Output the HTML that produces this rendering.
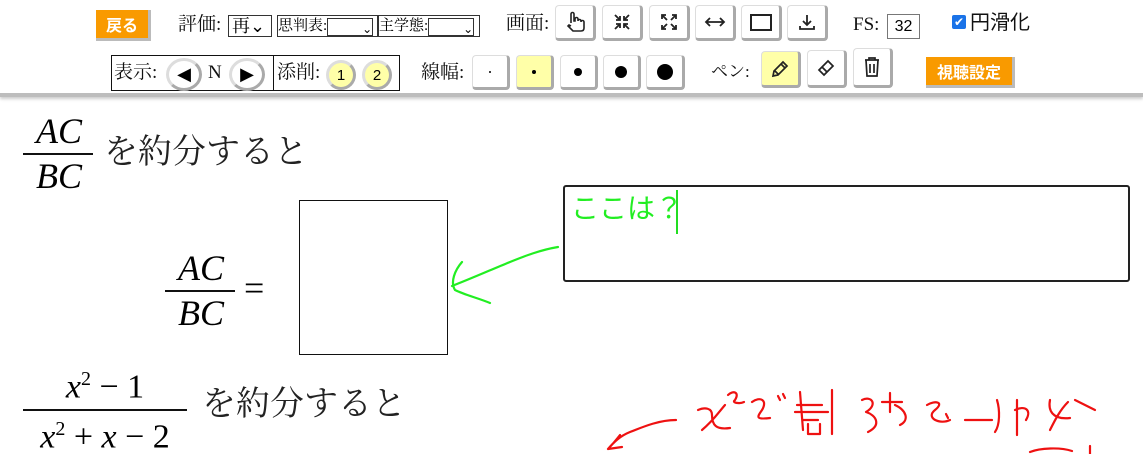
<!DOCTYPE html>
<html><head><meta charset="utf-8"><style>
body{margin:0;width:1143px;height:454px;overflow:hidden;background:#fff;position:relative;font-family:"Liberation Serif","Noto Serif CJK JP",serif;}
.a{position:absolute}
.tb{position:absolute;left:0;top:0;width:1143px;height:93px;background:#fff;border-bottom:4px solid #bdbdbd;box-shadow:0 2px 3px #ccc}
.btn{position:absolute;background:#fff;border:1px solid #ddd;border-right:3px solid #aaa;border-bottom:3px solid #aaa;border-radius:4px;box-sizing:border-box;display:flex;align-items:center;justify-content:center}
.lbl{position:absolute;font-size:19px;color:#111;line-height:1}
.sel{position:absolute;border:1px solid #333;box-sizing:border-box;background:#fff;font-size:16px;line-height:20px}
.or{position:absolute;background:#f99a00;color:#fff;font-weight:bold;font-family:"Liberation Sans","Noto Sans CJK JP",sans-serif;font-size:16px;display:flex;align-items:center;justify-content:center;border-right:3px solid #bbb;border-bottom:3px solid #bbb;box-sizing:border-box}
.circ{position:absolute;width:30px;height:30px;border-radius:50%;border:3px solid #ddd;border-right-color:#aaa;border-bottom-color:#aaa;box-sizing:border-box;display:flex;align-items:center;justify-content:center;font-family:"Liberation Sans",sans-serif;font-size:15px}
.m{font-family:"Liberation Serif","DejaVu Serif",serif;font-style:italic;font-size:36px;position:absolute;text-align:center;line-height:1}
.jp{position:absolute;font-size:34px;line-height:1;color:#222;font-family:"Liberation Serif","Noto Serif CJK JP",serif}
.bar{position:absolute;height:2px;background:#111}
</style></head><body>
<div class="tb"></div>
<div class="or" style="left:96px;top:10px;width:55px;height:31px;">戻る</div>
<div class="lbl" style="left:178px;top:15px;">評価:</div>
<div class="sel" style="left:228px;top:15px;width:44px;height:22px;padding-left:3px;font-size:18px">再⌄</div>
<div class="sel" style="left:277px;top:15px;width:101px;height:22px;font-size:15px">思判表:<span style="display:inline-block;width:44px;height:16px;border:1px solid #333;vertical-align:middle;text-align:right;font-size:12px">⌄</span></div>
<div class="sel" style="left:378px;top:15px;width:102px;height:22px;font-size:15px">主学態:<span style="display:inline-block;width:44px;height:16px;border:1px solid #333;vertical-align:middle;text-align:right;font-size:12px">⌄</span></div>
<div class="lbl" style="left:506px;top:14px;">画面:</div>
<div class="btn" style="left:555px;top:5px;width:41px;height:36px"><svg width="22" height="22" viewBox="0 0 22 22" fill="none" stroke="#222" stroke-width="1.6"><path d="M7 12V3a1.5 1.5 0 0 1 3 0v7h1V8a1.5 1.5 0 0 1 3 0v2a1.5 1.5 0 0 1 3 0v1a1.5 1.5 0 0 1 3 0v6c0 2-1 3-3 3H9L4 15l1-1 2 1"/></svg></div>
<div class="btn" style="left:602px;top:5px;width:41px;height:36px"><svg width="20" height="20" viewBox="0 0 20 20" stroke="#222" stroke-width="1.8" fill="none"><path d="M3 3l5 5M8 4v4H4M17 3l-5 5M12 4v4h4M3 17l5-5M4 12h4v4M17 17l-5-5M16 12h-4v4"/></svg></div>
<div class="btn" style="left:649px;top:5px;width:41px;height:36px"><svg width="20" height="20" viewBox="0 0 20 20" stroke="#222" stroke-width="1.8" fill="none"><path d="M3 3l5 5M3 7V3h4M17 3l-5 5M13 3h4v4M3 17l5-5M3 13v4h4M17 17l-5-5M17 13v4h-4"/></svg></div>
<div class="btn" style="left:695px;top:5px;width:41px;height:36px"><svg width="22" height="14" viewBox="0 0 22 14" stroke="#222" stroke-width="1.8" fill="none"><path d="M2 7h18M6 3L2 7l4 4M16 3l4 4-4 4"/></svg></div>
<div class="btn" style="left:741px;top:5px;width:41px;height:36px"><div style="width:18px;height:13px;border:2px solid #222"></div></div>
<div class="btn" style="left:787px;top:5px;width:41px;height:36px"><svg width="20" height="20" viewBox="0 0 20 20" stroke="#222" stroke-width="1.8" fill="none"><path d="M10 3v10M6 9l4 4 4-4M3 14v3h14v-3"/></svg></div>
<div class="lbl" style="left:853px;top:15px;">FS:</div>
<div class="sel" style="left:887px;top:14px;width:33px;height:25px;font-family:'Liberation Sans',sans-serif;font-size:16px;text-align:center;line-height:24px;border-color:#777">32</div>
<div class="a" style="left:952px;top:15px;width:14px;height:14px;background:#1a73e8;border-radius:2px;color:#fff;font-size:12px;line-height:14px;text-align:center;font-family:'DejaVu Sans'">✔</div>
<div class="lbl" style="left:970px;top:13px;font-size:20px;font-family:'Liberation Sans','Noto Sans CJK JP',sans-serif">円滑化</div>

<div class="a" style="left:111px;top:55px;width:163px;height:36px;border:1px solid #111;box-sizing:border-box"></div>
<div class="a" style="left:273px;top:55px;width:127px;height:36px;border:1px solid #111;box-sizing:border-box"></div>
<div class="lbl" style="left:114px;top:63px;">表示:</div>
<div class="circ" style="left:166px;top:58px;width:36px;height:33px;font-size:18px">◀</div>
<div class="lbl" style="left:208px;top:63px;">N</div>
<div class="circ" style="left:229px;top:58px;width:36px;height:33px;font-size:18px">▶</div>
<div class="lbl" style="left:277px;top:63px;">添削:</div>
<div class="circ" style="left:326px;top:60px;background:#ffffa8">1</div>
<div class="circ" style="left:362px;top:60px;background:#ffffa8">2</div>
<div class="lbl" style="left:421px;top:63px;">線幅:</div>
<div class="btn" style="left:472px;top:55px;width:38px;height:35px"><div style="width:2px;height:2px;background:#000;border-radius:50%"></div></div>
<div class="btn" style="left:516px;top:55px;width:38px;height:35px;background:#ffffa8"><div style="width:4px;height:4px;background:#000;border-radius:50%"></div></div>
<div class="btn" style="left:560px;top:55px;width:38px;height:35px"><div style="width:8px;height:8px;background:#000;border-radius:50%"></div></div>
<div class="btn" style="left:603px;top:55px;width:38px;height:35px"><div style="width:12px;height:12px;background:#000;border-radius:50%"></div></div>
<div class="btn" style="left:646px;top:55px;width:39px;height:35px"><div style="width:16px;height:16px;background:#000;border-radius:50%"></div></div>
<div class="lbl" style="left:711px;top:63px;font-size:17px">ペン:</div>
<div class="btn" style="left:761px;top:51px;width:40px;height:37px;background:#ffffa8"><svg width="20" height="20" viewBox="0 0 20 20" stroke="#222" stroke-width="1.7" fill="none"><path d="M3 17l1-5L13 3l4 4-9 9zM11 5l4 4M5 12l3 3"/></svg></div>
<div class="btn" style="left:807px;top:50px;width:40px;height:38px"><svg width="20" height="20" viewBox="0 0 20 20" stroke="#222" stroke-width="1.7" fill="none"><path d="M8 17L3 12 12 3l5 5zM6 9l5 5"/></svg></div>
<div class="btn" style="left:853px;top:48px;width:40px;height:40px"><svg width="18" height="22" viewBox="0 0 18 22" stroke="#222" stroke-width="1.7" fill="none"><path d="M2 4h14M6 4V2h6v2M3 4l1 16h10l1-16M7 8v9M11 8v9"/></svg></div>
<div class="or" style="left:926px;top:57px;width:89px;height:31px;">視聴設定</div>

<!-- content -->
<div class="m" style="left:26px;top:113px;width:66px">AC</div>
<div class="bar" style="left:23px;top:153px;width:70px"></div>
<div class="m" style="left:26px;top:158px;width:66px">BC</div>
<div class="jp" style="left:104px;top:136px">を約分すると</div>

<div class="m" style="left:168px;top:250px;width:66px">AC</div>
<div class="bar" style="left:165px;top:290px;width:70px"></div>
<div class="m" style="left:168px;top:295px;width:66px">BC</div>
<div class="a" style="left:244px;top:270px;font-size:36px;line-height:1;font-family:'Liberation Serif',serif">=</div>
<div class="a" style="left:299px;top:200px;width:149px;height:155px;border:1.5px solid #111;box-sizing:border-box"></div>

<div class="m" style="left:24px;top:369px;width:162px;font-size:34px">x<sup style="font-size:20px;font-style:normal">2</sup><span style="font-style:normal"> − 1</span></div>
<div class="bar" style="left:23px;top:409px;width:164px"></div>
<div class="m" style="left:24px;top:419px;width:162px;font-size:34px">x<sup style="font-size:20px;font-style:normal">2</sup><span style="font-style:normal"> + </span>x<span style="font-style:normal"> − 2</span></div>
<div class="jp" style="left:202px;top:388px">を約分すると</div>

<div class="a" style="left:563px;top:185px;width:567px;height:97px;border:2px solid #222;border-radius:3px;box-sizing:border-box"></div>
<div class="a" style="left:571px;top:195px;font-size:28px;color:#22ee22;font-family:'Liberation Sans','Noto Sans CJK JP',sans-serif;line-height:1">ここは？</div>
<div class="a" style="left:676px;top:190px;width:2px;height:44px;background:#22dd22"></div>

<svg class="a" style="left:0;top:0" width="1143" height="454" fill="none" stroke-linecap="round" stroke-linejoin="round">
<path d="M558 247C540 250 525 256 510 262 495 268 475 277 452 286M462 262C455 270 450 282 455 290 465 295 478 298 490 303" stroke="#22ee22" stroke-width="2.2"/>
<g stroke="#ee1111" stroke-width="2.2">
<path d="M676 420C660 420 645 426 630 432 620 436 614 442 608 449M620 435C616 440 612 445 608 449L622 447"/>
<path d="M698 410C705 407 712 408 712 415 712 425 716 430 730 428M725 405C718 413 714 420 702 430"/>
<path d="M728 395C733 390 740 392 735 400 731 403 740 404 744 402"/>
<path d="M752 402C760 396 768 400 762 410 758 416 754 420 770 418"/>
<path d="M778 396L780 400M783 394L785 398"/>
<path d="M800 392L803 430M797 405H822M795 412H828M803 420H818M808 424V434H820V424M832 390V434"/>
<path d="M862 400C872 395 878 405 866 412 876 415 882 425 868 432"/>
<path d="M890 393V412M882 402H902M895 405C906 410 910 420 900 425"/>
<path d="M927 405C935 400 945 402 935 410 925 418 940 425 950 420M946 414L948 418"/>
<path d="M965 420H992M997 400C1000 410 1000 425 995 432"/>
<path d="M1015 410C1025 405 1032 410 1026 420M1017 400V435"/>
<path d="M1050 400C1048 410 1052 420 1070 418M1068 402C1060 410 1055 420 1050 430M1075 400L1095 410"/>
<path d="M1030 452C1040 448 1060 447 1072 451M1090 446V454"/>
</g>
</svg>
</body></html>
